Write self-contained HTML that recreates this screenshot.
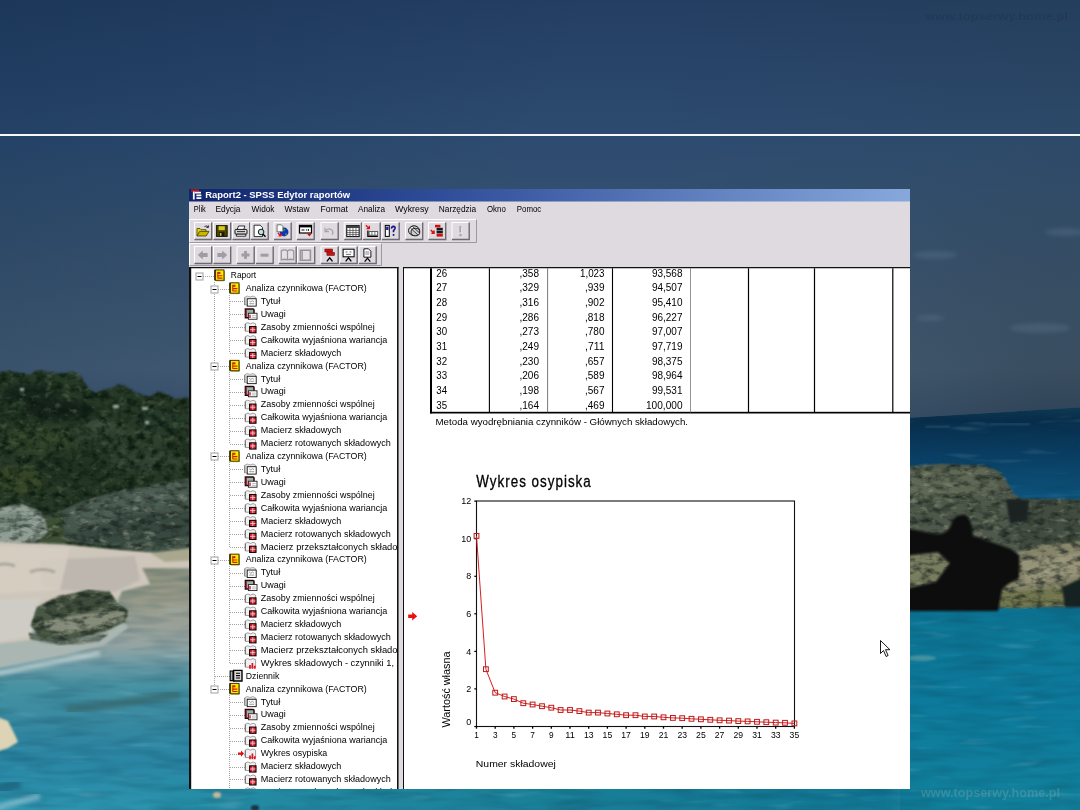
<!DOCTYPE html>
<html lang="pl"><head><meta charset="utf-8"><title>Raport2 - SPSS Edytor raportów</title>
<style>
html,body{margin:0;padding:0;background:#22385a;}
body{width:1080px;height:810px;overflow:hidden;}
svg{display:block;position:absolute;left:0;top:0;font-family:'Liberation Sans', sans-serif;will-change:transform;}
text{white-space:pre;}
</style></head>
<body>
<svg width="1080" height="810" viewBox="0 0 1080 810">

<defs>
<linearGradient id="sky" gradientUnits="userSpaceOnUse" x1="0" y1="0" x2="0" y2="425">
<stop offset="0" stop-color="#233e62"/><stop offset="0.32" stop-color="#2d4b70"/><stop offset="0.64" stop-color="#3a5470"/><stop offset="0.87" stop-color="#445c74"/><stop offset="1" stop-color="#38506c"/>
</linearGradient>
<linearGradient id="skyL" gradientUnits="userSpaceOnUse" x1="0" y1="0" x2="600" y2="300">
<stop offset="0" stop-color="#001e3c" stop-opacity="0.22"/><stop offset="0.8" stop-color="#001e3c" stop-opacity="0"/><stop offset="1" stop-color="#001e3c" stop-opacity="0"/>
</linearGradient>
<linearGradient id="seaR" gradientUnits="userSpaceOnUse" x1="0" y1="408" x2="0" y2="810">
<stop offset="0" stop-color="#0e3852"/><stop offset="0.03" stop-color="#082c4a"/><stop offset="0.06" stop-color="#083252"/><stop offset="0.12" stop-color="#0a3e64"/><stop offset="0.18" stop-color="#0c4c74"/><stop offset="0.22" stop-color="#0c527c"/><stop offset="0.3" stop-color="#0c5a84"/><stop offset="0.49" stop-color="#0c7090"/><stop offset="0.55" stop-color="#0d7796"/><stop offset="0.73" stop-color="#0d7a9c"/><stop offset="0.95" stop-color="#11809c"/><stop offset="1" stop-color="#11809c"/>
</linearGradient>
<linearGradient id="seaL" gradientUnits="userSpaceOnUse" x1="0" y1="560" x2="0" y2="810">
<stop offset="0" stop-color="#90927e"/><stop offset="0.12" stop-color="#969884"/><stop offset="0.24" stop-color="#9a9f94"/><stop offset="0.34" stop-color="#94a4a2"/><stop offset="0.42" stop-color="#6c9ca6"/><stop offset="0.5" stop-color="#4892a2"/><stop offset="0.68" stop-color="#3487a0"/><stop offset="0.8" stop-color="#2a86a4"/><stop offset="1" stop-color="#2c94ae"/>
</linearGradient>
<filter id="b1" x="-10%" y="-10%" width="120%" height="120%"><feGaussianBlur stdDeviation="1"/></filter>
<filter id="b2" x="-10%" y="-10%" width="120%" height="120%"><feGaussianBlur stdDeviation="2"/></filter>
<filter id="b4" x="-20%" y="-20%" width="140%" height="140%"><feGaussianBlur stdDeviation="4"/></filter>
<filter id="b8" x="-30%" y="-30%" width="160%" height="160%"><feGaussianBlur stdDeviation="8"/></filter>

<filter id="txTree" x="0" y="0" width="100%" height="100%" color-interpolation-filters="sRGB">
<feTurbulence type="fractalNoise" baseFrequency="0.11 0.14" numOctaves="3" seed="3" result="n"/>
<feColorMatrix in="n" type="matrix" values="0 0 0 0 0  0 0 0 0 0  0 0 0 0 0  2.4 0 0 0 -0.95" result="a"/>
<feFlood flood-color="#0c1c10" result="f"/>
<feComposite in="f" in2="a" operator="in" result="dark"/>
<feColorMatrix in="n" type="matrix" values="0 0 0 0 0  0 0 0 0 0  0 0 0 0 0  0 -2.4 0 0 1.05" result="a2"/>
<feFlood flood-color="#4c5e44" result="f2"/>
<feComposite in="f2" in2="a2" operator="in" result="light"/>
<feMerge result="m"><feMergeNode in="SourceGraphic"/><feMergeNode in="dark"/><feMergeNode in="light"/></feMerge>
<feComposite in="m" in2="SourceGraphic" operator="in"/>
<feGaussianBlur stdDeviation="0.7"/>
</filter>
<filter id="txRock" x="0" y="0" width="100%" height="100%" color-interpolation-filters="sRGB">
<feTurbulence type="fractalNoise" baseFrequency="0.09 0.16" numOctaves="3" seed="11" result="n"/>
<feColorMatrix in="n" type="matrix" values="0 0 0 0 0  0 0 0 0 0  0 0 0 0 0  1.7 0 0 0 -0.72" result="a"/>
<feFlood flood-color="#101a16" result="f"/>
<feComposite in="f" in2="a" operator="in" result="dark"/>
<feColorMatrix in="n" type="matrix" values="0 0 0 0 0  0 0 0 0 0  0 0 0 0 0  0 -1.7 0 0 0.72" result="a2"/>
<feFlood flood-color="#a4a690" result="f2"/>
<feComposite in="f2" in2="a2" operator="in" result="light"/>
<feMerge result="m"><feMergeNode in="SourceGraphic"/><feMergeNode in="dark"/><feMergeNode in="light"/></feMerge>
<feComposite in="m" in2="SourceGraphic" operator="in"/>
<feGaussianBlur stdDeviation="0.7"/>
</filter>
<filter id="txSea" x="0" y="0" width="100%" height="100%" color-interpolation-filters="sRGB">
<feTurbulence type="fractalNoise" baseFrequency="0.02 0.12" numOctaves="2" seed="5" result="n"/>
<feColorMatrix in="n" type="matrix" values="0 0 0 0 0  0 0 0 0 0  0 0 0 0 0  0.6 0 0 0 -0.24" result="a"/>
<feFlood flood-color="#0a4058" result="f"/>
<feComposite in="f" in2="a" operator="in" result="dark"/>
<feColorMatrix in="n" type="matrix" values="0 0 0 0 0  0 0 0 0 0  0 0 0 0 0  0 -0.6 0 0 0.22" result="a2"/>
<feFlood flood-color="#bfe6ee" result="f2"/>
<feComposite in="f2" in2="a2" operator="in" result="light"/>
<feMerge result="m"><feMergeNode in="SourceGraphic"/><feMergeNode in="dark"/><feMergeNode in="light"/></feMerge>
<feComposite in="m" in2="SourceGraphic" operator="in"/>
</filter>
<linearGradient id="strip" gradientUnits="userSpaceOnUse" x1="150" y1="0" x2="930" y2="0"><stop offset="0" stop-color="#268ea6"/><stop offset="0.5" stop-color="#1a8098"/><stop offset="1" stop-color="#107694"/></linearGradient>
<linearGradient id="stripM" gradientUnits="userSpaceOnUse" x1="150" y1="0" x2="930" y2="0"><stop offset="0" stop-color="#fff" stop-opacity="0"/><stop offset="0.06" stop-color="#fff" stop-opacity="1"/><stop offset="0.94" stop-color="#fff" stop-opacity="1"/><stop offset="1" stop-color="#fff" stop-opacity="0"/></linearGradient><mask id="mstrip"><rect x="150" y="770" width="780" height="40" fill="url(#stripM)"/></mask>
<radialGradient id="skyR" gradientUnits="userSpaceOnUse" cx="1060" cy="440" r="300"><stop offset="0" stop-color="#16202e" stop-opacity="0.30"/><stop offset="0.45" stop-color="#16202e" stop-opacity="0.12"/><stop offset="1" stop-color="#16202e" stop-opacity="0"/></radialGradient>
<linearGradient id="skyG" gradientUnits="userSpaceOnUse" x1="650" y1="0" x2="1080" y2="0"><stop offset="0" stop-color="#2d3c28" stop-opacity="0"/><stop offset="1" stop-color="#2d3c28" stop-opacity="0.1"/></linearGradient>
</defs>
<!-- sky -->
<rect width="1080" height="425" fill="url(#sky)"/>
<rect width="1080" height="425" fill="url(#skyL)"/>
<rect x="600" y="100" width="480" height="325" fill="url(#skyR)"/>
<rect x="650" y="0" width="430" height="425" fill="url(#skyG)"/>
<g fill="#7890a8" opacity="0.22" filter="url(#b2)"><ellipse cx="935" cy="255" rx="22" ry="4"/><ellipse cx="1065" cy="232" rx="20" ry="4"/><ellipse cx="1040" cy="328" rx="30" ry="5"/><ellipse cx="930" cy="318" rx="14" ry="3"/></g>

<!-- ===== right side ===== -->
<g filter="url(#txSea)">
<polygon points="880,419.5 1080,407.5 1080,810 880,810" fill="url(#seaR)"/>
</g>
<path d="M925,427 h25 M990,424 h40" stroke="#6f98a8" stroke-width="1.5" opacity="0.35" filter="url(#b1)"/>
<g filter="url(#txRock)">
<g filter="url(#b1)">
<polygon points="900,467 940,463 985,465 1000,471 1008,482 1013,492 1021,498 1085,499 1085,607 1018,609 900,607" fill="#4f594b"/>
<polygon points="900,470 985,468 1000,488 960,500 900,498" fill="#626b58" opacity="0.8"/>
<polygon points="900,500 1000,500 1005,530 960,512 900,525" fill="#4c5748" opacity="0.8"/>
<polygon points="1012,498 1085,499 1085,548 1020,553" fill="#434e41"/>
<polygon points="1019,552 1040,546 1085,541 1085,604 1000,608 998,585 1018,580" fill="#86856a"/>
<polygon points="1022,560 1085,552 1085,575 1026,584" fill="#9a967c" opacity="0.8"/>
<polygon points="1000,592 1085,586 1085,604 1000,608" fill="#6e7348" opacity="0.8"/>
<polygon points="900,556 938,552 950,563 936,582 900,590" fill="#797d5f"/>
</g>
</g>
<g filter="url(#b1)">
<path d="M900,527 L930,533 Q948,538 952,522 Q956,513 966,515 Q972,520 973,536 L1000,545 Q1016,550 1019,556 L1019,578 Q1006,584 1002,590 L998,611 L900,611 L900,590 L936,582 L950,563 L938,552 L900,556 Z" fill="#090f0f"/>
<polygon points="1006,499 1029,500 1027,520 1010,524" fill="#1a2424"/>
<polygon points="1062,587 1085,577 1085,607 1065,607" fill="#182420"/>
</g>
<path d="M1000,610 h80" stroke="#9cc0c0" stroke-width="2.5" opacity="0.6" filter="url(#b1)"/>
<path d="M900,612 h100" stroke="#0a3a4a" stroke-width="4" opacity="0.6" filter="url(#b1)"/>
<ellipse cx="922" cy="658" rx="14" ry="3" fill="#5a9ca0" opacity="0.7" filter="url(#b1)"/>
<!-- ===== left side ===== -->
<g filter="url(#txSea)">
<rect x="0" y="555" width="900" height="255" fill="url(#seaL)"/>
</g>
<g filter="url(#txTree)">
<g filter="url(#b1)">
<polygon points="-5,373 8,370 15,372 30,374 38,369 45,371 60,373 72,371 80,374 86,385 95,392 104,389 110,388 118,384 125,385 135,392 150,396 158,391 165,393 175,398 186,397 200,402 200,560 -5,560" fill="#253727"/>
</g>
<g filter="url(#b2)">
<ellipse cx="30" cy="395" rx="28" ry="10" fill="#19271c"/>
<ellipse cx="60" cy="410" rx="35" ry="9" fill="#17241a"/>
<ellipse cx="120" cy="440" rx="50" ry="12" fill="#2d412d"/>
<ellipse cx="40" cy="440" rx="35" ry="14" fill="#31442b"/>
<ellipse cx="160" cy="420" rx="30" ry="10" fill="#283b29"/>
<ellipse cx="70" cy="470" rx="40" ry="12" fill="#203120"/>
<ellipse cx="20" cy="480" rx="25" ry="14" fill="#344427"/>
<ellipse cx="150" cy="462" rx="40" ry="10" fill="#304331"/>
<ellipse cx="100" cy="425" rx="18" ry="6" fill="#384937"/>
</g>
</g>
<g fill="#c8d0cc" filter="url(#b1)" opacity="0.8"><rect x="113" y="405" width="6" height="3"/><rect x="142" y="407" width="6" height="3"/><rect x="145" y="421" width="4" height="3"/><rect x="20" y="388" width="4" height="3"/></g>
<g filter="url(#txRock)">
<g filter="url(#b1)">
<polygon points="35,520 60,510 90,498 120,490 150,485 200,477 200,556 150,553 100,546 60,541 35,539" fill="#44564c"/>
<polygon points="70,512 120,494 200,482 200,500 120,512 80,530" fill="#52645a" opacity="0.7"/>
<polygon points="70,535 130,515 200,510 200,535 140,540 100,545" fill="#36463c" opacity="0.8"/>
<polygon points="36,520 62,512 66,545 40,545" fill="#3d4f36"/>
<polygon points="-5,508 22,503 42,512 48,532 34,543 -5,546" fill="#909e94"/>
<polygon points="-5,515 20,512 30,525 -5,535" fill="#788a7e"/>
</g>
</g>
<g filter="url(#b1)">
<polygon points="-5,542 60,544 120,550 200,556 200,568 142,568 150,584 122,591 116,608 128,628 104,645 60,656 -5,669" fill="#aab6b2"/><polygon points="-5,542 60,544 120,550 200,556 200,568 142,568 150,584 122,591 116,600 40,612 30,640 -5,644" fill="#cec6ba"/>
<polygon points="40,560 135,556 140,580 115,592 60,590 42,585" fill="#b3adaa" opacity="0.6"/>
<polygon points="-5,600 40,598 30,636 -5,642" fill="#cfccc6"/><polygon points="-5,546 70,548 60,590 -5,594" fill="#d6cec2" opacity="0.8"/>
<polygon points="150,553 190,548 200,550 200,560 165,562" fill="#a9a88e"/>
<path d="M-5,566 q10,-4 20,0 M30,572 q12,-5 25,0" stroke="#8d8c84" stroke-width="3" fill="none" opacity="0.6"/>
</g>
<g filter="url(#txRock)">
<g filter="url(#b1)">
<polygon points="30,626 36,607 58,596 88,589 110,591 118,603 129,611 126,622 106,632 70,640 40,638" fill="#4a5944"/>
<polygon points="42,606 62,597 90,591 108,594 114,604 100,608 70,610 50,614" fill="#3f4e3c"/>
<polygon points="44,622 70,616 100,612 124,611 124,620 100,628 70,632 46,630" fill="#8f9582" opacity="0.85"/>
<polygon points="28,632 70,640 110,633 100,642 60,646 30,640" fill="#3c4a38" opacity="0.8"/>
</g>
</g>
<polygon points="-5,716 8,721 15,735 18,742 8,748 -5,752" fill="#dcd4b4" filter="url(#b1)"/>
<path d="M-5,674 L100,653" stroke="#d4dede" stroke-width="4" fill="none" filter="url(#b2)" opacity="0.85"/>
<path d="M66,710 L130,702 L180,694" stroke="#386a70" stroke-width="8" fill="none" filter="url(#b2)" opacity="0.8"/>
<path d="M-5,790 L20,783" stroke="#1a5f7a" stroke-width="10" fill="none" filter="url(#b2)" opacity="0.7"/>
<path d="M-5,808 L40,796" stroke="#a8d4e0" stroke-width="6" fill="none" filter="url(#b2)" opacity="0.6"/>
<!-- bottom strip water -->
<g mask="url(#mstrip)"><g filter="url(#txSea)"><rect x="150" y="780" width="780" height="30" fill="url(#strip)"/></g></g>
<ellipse cx="217" cy="795" rx="4" ry="3" fill="#c8b898" filter="url(#b1)"/>
<ellipse cx="255" cy="808" rx="4" ry="3" fill="#1a3040" filter="url(#b1)"/>

<rect x="0" y="134" width="1080" height="2" fill="#f6f8fa"/>
<defs><filter id="b05"><feGaussianBlur stdDeviation="0.6"/></filter><linearGradient id="tgrad" gradientUnits="userSpaceOnUse" x1="189" y1="0" x2="910" y2="0"><stop offset="0" stop-color="#10266c"/><stop offset="0.35" stop-color="#2f4d9a"/><stop offset="1" stop-color="#86a8dc"/></linearGradient></defs>
<text x="921.00" y="797.00" font-size="13" fill="#a0b4b0" font-weight="bold" textLength="139.00" lengthAdjust="spacingAndGlyphs" opacity="0.28" filter="url(#b05)">www.topserwy.home.pl</text>
<text x="925.00" y="19.50" font-size="11.5" fill="#101c30" font-weight="bold" textLength="143.00" lengthAdjust="spacingAndGlyphs" opacity="0.16" filter="url(#b05)">www.topserwy.home.pl</text>
<g id="win">
<rect x="189" y="189" width="721" height="600" fill="#dedae0"/>
<rect x="189" y="189" width="721" height="12.5" fill="url(#tgrad)"/>
<g transform="translate(192,190)"><rect x="-1" y="0" width="11" height="10.6" fill="#14246a"/><rect x="-1" y="-0.6" width="8" height="2.2" fill="#c01818"/><path d="M1.8,1.6 v8 M3,2.6 h6 M4.4,5.4 h5 M4.4,8.2 h5" stroke="#fff" stroke-width="1.8" fill="none"/></g>
<text x="205.20" y="197.80" font-size="9" fill="#fff" font-weight="bold" textLength="145.00" lengthAdjust="spacingAndGlyphs">Raport2 - SPSS Edytor raportów</text>
<text x="193.80" y="212.40" font-size="9" fill="#000" textLength="12.00" lengthAdjust="spacingAndGlyphs">Plik</text>
<text x="215.50" y="212.40" font-size="9" fill="#000" textLength="25.00" lengthAdjust="spacingAndGlyphs">Edycja</text>
<text x="251.50" y="212.40" font-size="9" fill="#000" textLength="23.00" lengthAdjust="spacingAndGlyphs">Widok</text>
<text x="284.50" y="212.40" font-size="9" fill="#000" textLength="25.00" lengthAdjust="spacingAndGlyphs">Wstaw</text>
<text x="320.50" y="212.40" font-size="9" fill="#000" textLength="27.50" lengthAdjust="spacingAndGlyphs">Format</text>
<text x="358.00" y="212.40" font-size="9" fill="#000" textLength="27.00" lengthAdjust="spacingAndGlyphs">Analiza</text>
<text x="395.00" y="212.40" font-size="9" fill="#000" textLength="33.75" lengthAdjust="spacingAndGlyphs">Wykresy</text>
<text x="438.75" y="212.40" font-size="9" fill="#000" textLength="37.50" lengthAdjust="spacingAndGlyphs">Narzędzia</text>
<text x="487.00" y="212.40" font-size="9" fill="#000" textLength="18.75" lengthAdjust="spacingAndGlyphs">Okno</text>
<text x="516.75" y="212.40" font-size="9" fill="#000" textLength="24.50" lengthAdjust="spacingAndGlyphs">Pomoc</text>
<path d="M189.5,242.5 V219.5 H476.5" stroke="#fff" fill="none"/><path d="M189.5,242.5 H476.5 V219.5" stroke="#9c98a0" fill="none"/>
<path d="M189.5,265.5 V243.5 H381.5" stroke="#fff" fill="none"/><path d="M189.5,265.5 H381.5 V243.5" stroke="#9c98a0" fill="none"/>
<g transform="translate(194.00,222.00)">
<rect x="0" y="0" width="18" height="17.5" fill="#dedae0"/>
<path d="M0.5,17 V0.5 H17.5" stroke="#fff" fill="none"/><path d="M0.5,17.5 H17.7 V0.5" stroke="#6e6a72" stroke-width="1.4" fill="none"/>
<path d="M3,14 v-7.5 h3 l1,1.2 h5 v2" fill="#e8d800" stroke="#403800" stroke-width="0.8"/><path d="M3,14 l2.6,-4.6 h9.4 l-2.8,4.6 z" fill="#c8b800" stroke="#403800" stroke-width="0.8"/><path d="M10.5,4.6 q2.2,-1.6 3.6,0.6 m0.3,-1.8 v2 h-2" stroke="#000" stroke-width="0.8" fill="none"/>
</g>
<g transform="translate(213.00,222.00)">
<rect x="0" y="0" width="18" height="17.5" fill="#dedae0"/>
<path d="M0.5,17 V0.5 H17.5" stroke="#fff" fill="none"/><path d="M0.5,17.5 H17.7 V0.5" stroke="#6e6a72" stroke-width="1.4" fill="none"/>
<rect x="3.4" y="3.6" width="10.8" height="10.8" fill="#4a4400" stroke="#101000" stroke-width="0.9"/><rect x="5.6" y="4.2" width="6.2" height="4" fill="#d8cc20"/><rect x="6" y="10.2" width="5.4" height="4" fill="#1a1800"/><rect x="6.8" y="11" width="1.7" height="2.8" fill="#c8c040"/>
</g>
<g transform="translate(232.00,222.00)">
<rect x="0" y="0" width="18" height="17.5" fill="#dedae0"/>
<path d="M0.5,17 V0.5 H17.5" stroke="#fff" fill="none"/><path d="M0.5,17.5 H17.7 V0.5" stroke="#6e6a72" stroke-width="1.4" fill="none"/>
<path d="M5.2,7.4 l1.4,-3.4 h6.2 l-1,3.4" fill="#fff" stroke="#000" stroke-width="0.8"/><rect x="3" y="7.4" width="12" height="4.8" rx="1" fill="#d8d8d8" stroke="#000" stroke-width="0.9"/><path d="M4.4,12.2 h9.4 v2 h-9.4 z" fill="#fff" stroke="#000" stroke-width="0.8"/><path d="M5,9.6 h8" stroke="#000" stroke-width="0.8"/>
</g>
<g transform="translate(250.50,222.00)">
<rect x="0" y="0" width="18" height="17.5" fill="#dedae0"/>
<path d="M0.5,17 V0.5 H17.5" stroke="#fff" fill="none"/><path d="M0.5,17.5 H17.7 V0.5" stroke="#6e6a72" stroke-width="1.4" fill="none"/>
<path d="M3.6,3.2 h6 l2.4,2.4 v9 h-8.4 z" fill="#fff" stroke="#000" stroke-width="0.8"/><circle cx="10.6" cy="10" r="2.8" fill="#b8e0e0" stroke="#000" stroke-width="0.9"/><path d="M12.6,12.2 l2.4,2.6" stroke="#000" stroke-width="1.4"/>
</g>
<g transform="translate(273.50,222.00)">
<rect x="0" y="0" width="18" height="17.5" fill="#dedae0"/>
<path d="M0.5,17 V0.5 H17.5" stroke="#fff" fill="none"/><path d="M0.5,17.5 H17.7 V0.5" stroke="#6e6a72" stroke-width="1.4" fill="none"/>
<circle cx="10.6" cy="10" r="4.4" fill="#1830c0"/><path d="M8.6,7 q2,-1.4 3.4,0.4 q-0.6,2 -2.6,2.2 z M11.4,11.4 q1.6,-0.6 2.6,0.6 q-0.8,1.6 -2.2,1.6 z" fill="#20a020"/><path d="M3.6,2.8 h4.2 l1.6,1.6 v5.4 h-5.8 z" fill="#fff" stroke="#404040" stroke-width="0.7"/><path d="M4.4,11 l3,3 m0,-2.4 v2.4 h-2.4" stroke="#e01010" stroke-width="1.2" fill="none"/>
</g>
<g transform="translate(296.50,222.00)">
<rect x="0" y="0" width="18" height="17.5" fill="#dedae0"/>
<path d="M0.5,17 V0.5 H17.5" stroke="#fff" fill="none"/><path d="M0.5,17.5 H17.7 V0.5" stroke="#6e6a72" stroke-width="1.4" fill="none"/>
<rect x="3" y="3.4" width="12" height="7.6" fill="#fff" stroke="#000" stroke-width="1.2"/><rect x="3" y="3.4" width="12" height="2" fill="#000"/><path d="M5,8 h3 M9.4,8 h1.4 M12,7.2 v1.6" stroke="#000" stroke-width="1"/><path d="M10.4,11.6 h5 l-2.5,3 z" fill="#c01010"/>
</g>
<g transform="translate(320.50,222.00)">
<rect x="0" y="0" width="18" height="17.5" fill="#dedae0"/>
<path d="M0.5,17 V0.5 H17.5" stroke="#fff" fill="none"/><path d="M0.5,17.5 H17.7 V0.5" stroke="#6e6a72" stroke-width="1.4" fill="none"/>
<path d="M5.4,8.6 q3.6,-3.6 6.6,0 q1,2 -0.4,4" stroke="#a8a4ac" stroke-width="1.3" fill="none"/><path d="M4.6,5.8 v3.8 h3.8" stroke="#a8a4ac" stroke-width="1.3" fill="none"/>
</g>
<g transform="translate(343.75,222.00)">
<rect x="0" y="0" width="18" height="17.5" fill="#dedae0"/>
<path d="M0.5,17 V0.5 H17.5" stroke="#fff" fill="none"/><path d="M0.5,17.5 H17.7 V0.5" stroke="#6e6a72" stroke-width="1.4" fill="none"/>
<rect x="3" y="3.6" width="12.4" height="11" fill="#fff" stroke="#000" stroke-width="1"/><rect x="3" y="3.6" width="12.4" height="2.4" fill="#404040"/><path d="M3,8.4 h12.4 M3,10.6 h12.4 M3,12.6 h12.4 M6.2,6 v8.6 M9.2,6 v8.6 M12.2,6 v8.6" stroke="#404040" stroke-width="0.7"/>
</g>
<g transform="translate(362.50,222.00)">
<rect x="0" y="0" width="18" height="17.5" fill="#dedae0"/>
<path d="M0.5,17 V0.5 H17.5" stroke="#fff" fill="none"/><path d="M0.5,17.5 H17.7 V0.5" stroke="#6e6a72" stroke-width="1.4" fill="none"/>
<path d="M3.4,3.2 l3.4,3.4 m0,-2.8 v2.8 h-2.8" stroke="#e01010" stroke-width="1.3" fill="none"/><path d="M5.4,8.4 v6 h10" stroke="#000" stroke-width="1.3" fill="none"/><rect x="6.6" y="9.6" width="8.6" height="3.6" fill="#fff" stroke="#404040" stroke-width="0.8"/><path d="M9.4,9.6 v3.6 M12.4,9.6 v3.6" stroke="#404040" stroke-width="0.7"/>
</g>
<g transform="translate(381.50,222.00)">
<rect x="0" y="0" width="18" height="17.5" fill="#dedae0"/>
<path d="M0.5,17 V0.5 H17.5" stroke="#fff" fill="none"/><path d="M0.5,17.5 H17.7 V0.5" stroke="#6e6a72" stroke-width="1.4" fill="none"/>
<rect x="3.8" y="3.4" width="4" height="11" fill="#fff" stroke="#000" stroke-width="1"/><rect x="4.6" y="4.6" width="2.4" height="3.4" fill="#1c2a9a"/><path d="M10,6.6 q0.2,-2.2 2,-2.2 q1.8,0.2 1.6,1.8 q-0.2,1.2 -1.6,2.4 v1.6" stroke="#14148a" stroke-width="1.6" fill="none"/><rect x="11.2" y="12" width="1.7" height="1.8" fill="#14148a"/>
</g>
<g transform="translate(405.00,222.00)">
<rect x="0" y="0" width="18" height="17.5" fill="#dedae0"/>
<path d="M0.5,17 V0.5 H17.5" stroke="#fff" fill="none"/><path d="M0.5,17.5 H17.7 V0.5" stroke="#6e6a72" stroke-width="1.4" fill="none"/>
<ellipse cx="9" cy="8.6" rx="5.4" ry="4.8" fill="#f4f4f4" stroke="#000" stroke-width="1"/><ellipse cx="10.4" cy="10" rx="4.4" ry="3.8" fill="#d0d0d0" stroke="#000" stroke-width="0.9"/><path d="M5.4,6 l7.6,7 M7.6,4.6 l6.6,6" stroke="#000" stroke-width="0.7"/>
</g>
<g transform="translate(428.00,222.00)">
<rect x="0" y="0" width="18" height="17.5" fill="#dedae0"/>
<path d="M0.5,17 V0.5 H17.5" stroke="#fff" fill="none"/><path d="M0.5,17.5 H17.7 V0.5" stroke="#6e6a72" stroke-width="1.4" fill="none"/>
<rect x="7" y="2.8" width="5.4" height="2.6" fill="#d01010"/><rect x="8.6" y="5.8" width="6.2" height="2.6" fill="#181818"/><rect x="8.6" y="8.8" width="6.2" height="2.6" fill="#181818"/><rect x="8.6" y="11.8" width="6.2" height="2.8" fill="#d01010"/><path d="M2.8,8 l3.2,3.2 m0,-2.6 v2.6 h-2.6" stroke="#e01010" stroke-width="1.5" fill="none"/>
</g>
<g transform="translate(451.50,222.00)">
<rect x="0" y="0" width="18" height="17.5" fill="#dedae0"/>
<path d="M0.5,17 V0.5 H17.5" stroke="#fff" fill="none"/><path d="M0.5,17.5 H17.7 V0.5" stroke="#6e6a72" stroke-width="1.4" fill="none"/>
<path d="M9,4 v6.4" stroke="#a8a4ac" stroke-width="2.2"/><rect x="7.9" y="12" width="2.2" height="2.2" fill="#a8a4ac"/><path d="M10,4.5 v6.4" stroke="#fff" stroke-width="0.6"/>
</g>
<g transform="translate(194.00,246.00)">
<rect x="0" y="0" width="18" height="17.5" fill="#dedae0"/>
<path d="M0.5,17 V0.5 H17.5" stroke="#fff" fill="none"/><path d="M0.5,17.5 H17.7 V0.5" stroke="#6e6a72" stroke-width="1.4" fill="none"/>
<path d="M3.8,9 l5,-4.6 v2.6 h4.8 v4 h-4.8 v2.6 z" fill="#a09ca4"/>
</g>
<g transform="translate(213.00,246.00)">
<rect x="0" y="0" width="18" height="17.5" fill="#dedae0"/>
<path d="M0.5,17 V0.5 H17.5" stroke="#fff" fill="none"/><path d="M0.5,17.5 H17.7 V0.5" stroke="#6e6a72" stroke-width="1.4" fill="none"/>
<path d="M14.2,9 l-5,-4.6 v2.6 h-4.8 v4 h4.8 v2.6 z" fill="#a09ca4"/>
</g>
<g transform="translate(236.50,246.00)">
<rect x="0" y="0" width="18" height="17.5" fill="#dedae0"/>
<path d="M0.5,17 V0.5 H17.5" stroke="#fff" fill="none"/><path d="M0.5,17.5 H17.7 V0.5" stroke="#6e6a72" stroke-width="1.4" fill="none"/>
<path d="M9,5 v8 M5,9 h8" stroke="#a09ca4" stroke-width="2.8"/>
</g>
<g transform="translate(255.50,246.00)">
<rect x="0" y="0" width="18" height="17.5" fill="#dedae0"/>
<path d="M0.5,17 V0.5 H17.5" stroke="#fff" fill="none"/><path d="M0.5,17.5 H17.7 V0.5" stroke="#6e6a72" stroke-width="1.4" fill="none"/>
<path d="M5,9.2 h8" stroke="#a09ca4" stroke-width="3"/>
</g>
<g transform="translate(278.50,246.00)">
<rect x="0" y="0" width="18" height="17.5" fill="#dedae0"/>
<path d="M0.5,17 V0.5 H17.5" stroke="#fff" fill="none"/><path d="M0.5,17.5 H17.7 V0.5" stroke="#6e6a72" stroke-width="1.4" fill="none"/>
<path d="M2.8,5 q3.1,-2.2 6.2,0 q3.1,-2.2 6.2,0 v8.8 q-3.1,-1.4 -6.2,0 q-3.1,-1.4 -6.2,0 z M9,5 v8.8" fill="#e4e0e6" stroke="#98949c" stroke-width="1.2"/><path d="M3,13.6 h12" stroke="#98949c" stroke-width="1.2"/>
</g>
<g transform="translate(297.00,246.00)">
<rect x="0" y="0" width="18" height="17.5" fill="#dedae0"/>
<path d="M0.5,17 V0.5 H17.5" stroke="#fff" fill="none"/><path d="M0.5,17.5 H17.7 V0.5" stroke="#6e6a72" stroke-width="1.4" fill="none"/>
<path d="M3.4,4.2 h10 v10 h-10 z" fill="#e4e0e6" stroke="#98949c" stroke-width="1.6"/><path d="M5.4,4.2 v10 M3.4,6 h2 M3.4,8 h2 M3.4,10 h2 M3.4,12 h2" stroke="#98949c" stroke-width="0.9"/>
</g>
<g transform="translate(320.50,246.00)">
<rect x="0" y="0" width="18" height="17.5" fill="#dedae0"/>
<path d="M0.5,17 V0.5 H17.5" stroke="#fff" fill="none"/><path d="M0.5,17.5 H17.7 V0.5" stroke="#6e6a72" stroke-width="1.4" fill="none"/>
<rect x="4.4" y="3" width="7.6" height="3" fill="#d01010" stroke="#500" stroke-width="0.5"/><rect x="6.4" y="6.4" width="7.6" height="3" fill="#d01010" stroke="#500" stroke-width="0.5"/><path d="M6.4,15.4 l2.8,-3.6 l2.8,3.6" stroke="#000" stroke-width="1.3" fill="none"/>
</g>
<g transform="translate(339.50,246.00)">
<rect x="0" y="0" width="18" height="17.5" fill="#dedae0"/>
<path d="M0.5,17 V0.5 H17.5" stroke="#fff" fill="none"/><path d="M0.5,17.5 H17.7 V0.5" stroke="#6e6a72" stroke-width="1.4" fill="none"/>
<rect x="3.6" y="3.2" width="11" height="7.6" fill="#fff" stroke="#000" stroke-width="1"/><path d="M6,6 h2 M10,6 h2 M6.4,8.4 h5" stroke="#606060" stroke-width="0.9"/><path d="M6.2,15.4 l2.8,-3.6 l2.8,3.6" stroke="#000" stroke-width="1.3" fill="none"/>
</g>
<g transform="translate(358.50,246.00)">
<rect x="0" y="0" width="18" height="17.5" fill="#dedae0"/>
<path d="M0.5,17 V0.5 H17.5" stroke="#fff" fill="none"/><path d="M0.5,17.5 H17.7 V0.5" stroke="#6e6a72" stroke-width="1.4" fill="none"/>
<path d="M5.4,2.8 h4.6 l2.4,2.4 v6 h-7 z" fill="#fff" stroke="#000" stroke-width="0.9"/><path d="M6.8,6 h4 M6.8,8 h4" stroke="#606060" stroke-width="0.8"/><path d="M6.2,15.6 l2.8,-3.4 l2.8,3.4" stroke="#000" stroke-width="1.3" fill="none"/>
</g>
<rect x="189" y="267" width="210" height="522" fill="#fff"/>
<rect x="403" y="267" width="507" height="522" fill="#fff"/>
<path d="M189,267.6 H398.5 M403,267.6 H910" stroke="#111" stroke-width="1.3" fill="none"/>
<rect x="189" y="267" width="2.2" height="522" fill="#101010"/>
<rect x="397" y="267" width="1.6" height="522" fill="#101010"/>
<rect x="403" y="267" width="1" height="522" fill="#101010"/>
<clipPath id="ctree"><rect x="191.2" y="268.2" width="205.8" height="520.8"/></clipPath>
<g clip-path="url(#ctree)">
<path d="M214.5,282 V689" stroke="#a4a4a4" stroke-width="1" stroke-dasharray="1 1" fill="none" shape-rendering="crispEdges"/>
<path d="M229.5,295 V353" stroke="#a4a4a4" stroke-width="1" stroke-dasharray="1 1" fill="none" shape-rendering="crispEdges"/>
<path d="M229.5,372 V444" stroke="#a4a4a4" stroke-width="1" stroke-dasharray="1 1" fill="none" shape-rendering="crispEdges"/>
<path d="M229.5,462 V547" stroke="#a4a4a4" stroke-width="1" stroke-dasharray="1 1" fill="none" shape-rendering="crispEdges"/>
<path d="M229.5,566 V663" stroke="#a4a4a4" stroke-width="1" stroke-dasharray="1 1" fill="none" shape-rendering="crispEdges"/>
<path d="M229.5,695 V792" stroke="#a4a4a4" stroke-width="1" stroke-dasharray="1 1" fill="none" shape-rendering="crispEdges"/>
<path d="M203,276.5 H215" stroke="#a4a4a4" stroke-width="1" stroke-dasharray="1 1" fill="none" shape-rendering="crispEdges"/>
<rect x="196" y="273.0" width="7" height="7" fill="#fff" stroke="#a0a0a0" stroke-width="1"/><path d="M197.5,276.5 H201.5" stroke="#000" stroke-width="1.1"/>
<g transform="translate(214.6,269.10)"><rect x="0.4" y="0.8" width="9" height="10.4" fill="#ffe800" stroke="#2a2400" stroke-width="0.9"/><path d="M0.4,1 v10" stroke="#201c00" stroke-width="1.4"/><path d="M9.8,2 v9.6 h-8.4" stroke="#6a6400" stroke-width="0.8" fill="none"/><rect x="2.6" y="2.8" width="3.2" height="2" fill="#d02000"/><path d="M3.2,4.6 v4.6 M3.2,6.6 h4.6 M3.2,9 h4.6" stroke="#d02000" stroke-width="1.1" fill="none"/></g>
<text x="230.80" y="278.20" font-size="8.5" fill="#000" textLength="25.30" lengthAdjust="spacingAndGlyphs">Raport</text>
<path d="M218,289.5 H230" stroke="#a4a4a4" stroke-width="1" stroke-dasharray="1 1" fill="none" shape-rendering="crispEdges"/>
<rect x="211" y="286.0" width="7" height="7" fill="#fff" stroke="#a0a0a0" stroke-width="1"/><path d="M212.5,289.5 H216.5" stroke="#000" stroke-width="1.1"/>
<g transform="translate(229.6,282.02)"><rect x="0.4" y="0.8" width="9" height="10.4" fill="#ffe800" stroke="#2a2400" stroke-width="0.9"/><path d="M0.4,1 v10" stroke="#201c00" stroke-width="1.4"/><path d="M9.8,2 v9.6 h-8.4" stroke="#6a6400" stroke-width="0.8" fill="none"/><rect x="2.6" y="2.8" width="3.2" height="2" fill="#d02000"/><path d="M3.2,4.6 v4.6 M3.2,6.6 h4.6 M3.2,9 h4.6" stroke="#d02000" stroke-width="1.1" fill="none"/></g>
<text x="245.80" y="291.12" font-size="8.5" fill="#000" textLength="121.00" lengthAdjust="spacingAndGlyphs">Analiza czynnikowa (FACTOR)</text>
<path d="M230,301.5 H245" stroke="#a4a4a4" stroke-width="1" stroke-dasharray="1 1" fill="none" shape-rendering="crispEdges"/>
<g transform="translate(244.6,294.94)"><path d="M0,2.4 q2.5,-2.4 5.4,-0.4 q3,-2 5.6,0.4 v7.6 h-11 z" fill="#e6e6e6" stroke="#9a9a9a" stroke-width="0.8"/><path d="M0.2,2.6 v7.4" stroke="#7a7a7a" stroke-width="1"/><rect x="2.6" y="3.8" width="9" height="7.4" fill="#fff" stroke="#101010" stroke-width="0.9"/><path d="M4.6,5.8 l1.6,1.2 l1.6,-1.2 l1.6,1.2 M4.6,8.8 h5" stroke="#707070" stroke-width="0.7" fill="none"/></g>
<text x="260.80" y="304.04" font-size="8.5" fill="#000" textLength="19.50" lengthAdjust="spacingAndGlyphs">Tytuł</text>
<path d="M230,314.5 H245" stroke="#a4a4a4" stroke-width="1" stroke-dasharray="1 1" fill="none" shape-rendering="crispEdges"/>
<g transform="translate(244.6,307.86)"><path d="M0.8,1.2 h7.6 q1,0 1,1 v7.6 h-8.6 z" fill="#98b4ac" stroke="#2a0408" stroke-width="1.5"/><path d="M1.6,2 v7.4" stroke="#a01828" stroke-width="1.2"/><rect x="3.8" y="5.4" width="8.6" height="6" fill="#fff" stroke="#202020" stroke-width="0.9"/><path d="M5.4,6.8 v3.4" stroke="#d81030" stroke-width="1.4"/><path d="M7.4,7.8 h3.8 M7.4,9.6 h3.8" stroke="#a0a0a0" stroke-width="0.7"/></g>
<text x="260.80" y="316.96" font-size="8.5" fill="#000" textLength="25.00" lengthAdjust="spacingAndGlyphs">Uwagi</text>
<path d="M230,327.5 H245" stroke="#a4a4a4" stroke-width="1" stroke-dasharray="1 1" fill="none" shape-rendering="crispEdges"/>
<g transform="translate(244.6,320.78)"><path d="M0.6,3 q2.6,-2.2 5.2,0 q2.6,-2.2 5.2,0 v7.5 h-10.4 z" fill="#f0f0f0" stroke="#8a8a8a" stroke-width="0.8"/><path d="M0.8,3.2 v7" stroke="#707070" stroke-width="1"/><rect x="5" y="5.8" width="6.4" height="6.2" fill="#d82838" stroke="#140000" stroke-width="1.1"/><path d="M5.6,8.9 h5.2 M8.2,6.4 v5" stroke="#f8dcdc" stroke-width="0.8"/></g>
<text x="260.80" y="329.88" font-size="8.5" fill="#000" textLength="114.00" lengthAdjust="spacingAndGlyphs">Zasoby zmienności wspólnej</text>
<path d="M230,340.5 H245" stroke="#a4a4a4" stroke-width="1" stroke-dasharray="1 1" fill="none" shape-rendering="crispEdges"/>
<g transform="translate(244.6,333.70)"><path d="M0.6,3 q2.6,-2.2 5.2,0 q2.6,-2.2 5.2,0 v7.5 h-10.4 z" fill="#f0f0f0" stroke="#8a8a8a" stroke-width="0.8"/><path d="M0.8,3.2 v7" stroke="#707070" stroke-width="1"/><rect x="5" y="5.8" width="6.4" height="6.2" fill="#d82838" stroke="#140000" stroke-width="1.1"/><path d="M5.6,8.9 h5.2 M8.2,6.4 v5" stroke="#f8dcdc" stroke-width="0.8"/></g>
<text x="260.80" y="342.80" font-size="8.5" fill="#000" textLength="126.50" lengthAdjust="spacingAndGlyphs">Całkowita wyjaśniona wariancja</text>
<path d="M230,353.5 H245" stroke="#a4a4a4" stroke-width="1" stroke-dasharray="1 1" fill="none" shape-rendering="crispEdges"/>
<g transform="translate(244.6,346.62)"><path d="M0.6,3 q2.6,-2.2 5.2,0 q2.6,-2.2 5.2,0 v7.5 h-10.4 z" fill="#f0f0f0" stroke="#8a8a8a" stroke-width="0.8"/><path d="M0.8,3.2 v7" stroke="#707070" stroke-width="1"/><rect x="5" y="5.8" width="6.4" height="6.2" fill="#d82838" stroke="#140000" stroke-width="1.1"/><path d="M5.6,8.9 h5.2 M8.2,6.4 v5" stroke="#f8dcdc" stroke-width="0.8"/></g>
<text x="260.80" y="355.72" font-size="8.5" fill="#000" textLength="80.50" lengthAdjust="spacingAndGlyphs">Macierz składowych</text>
<path d="M218,366.5 H230" stroke="#a4a4a4" stroke-width="1" stroke-dasharray="1 1" fill="none" shape-rendering="crispEdges"/>
<rect x="211" y="363.0" width="7" height="7" fill="#fff" stroke="#a0a0a0" stroke-width="1"/><path d="M212.5,366.5 H216.5" stroke="#000" stroke-width="1.1"/>
<g transform="translate(229.6,359.54)"><rect x="0.4" y="0.8" width="9" height="10.4" fill="#ffe800" stroke="#2a2400" stroke-width="0.9"/><path d="M0.4,1 v10" stroke="#201c00" stroke-width="1.4"/><path d="M9.8,2 v9.6 h-8.4" stroke="#6a6400" stroke-width="0.8" fill="none"/><rect x="2.6" y="2.8" width="3.2" height="2" fill="#d02000"/><path d="M3.2,4.6 v4.6 M3.2,6.6 h4.6 M3.2,9 h4.6" stroke="#d02000" stroke-width="1.1" fill="none"/></g>
<text x="245.80" y="368.64" font-size="8.5" fill="#000" textLength="121.00" lengthAdjust="spacingAndGlyphs">Analiza czynnikowa (FACTOR)</text>
<path d="M230,379.5 H245" stroke="#a4a4a4" stroke-width="1" stroke-dasharray="1 1" fill="none" shape-rendering="crispEdges"/>
<g transform="translate(244.6,372.46)"><path d="M0,2.4 q2.5,-2.4 5.4,-0.4 q3,-2 5.6,0.4 v7.6 h-11 z" fill="#e6e6e6" stroke="#9a9a9a" stroke-width="0.8"/><path d="M0.2,2.6 v7.4" stroke="#7a7a7a" stroke-width="1"/><rect x="2.6" y="3.8" width="9" height="7.4" fill="#fff" stroke="#101010" stroke-width="0.9"/><path d="M4.6,5.8 l1.6,1.2 l1.6,-1.2 l1.6,1.2 M4.6,8.8 h5" stroke="#707070" stroke-width="0.7" fill="none"/></g>
<text x="260.80" y="381.56" font-size="8.5" fill="#000" textLength="19.50" lengthAdjust="spacingAndGlyphs">Tytuł</text>
<path d="M230,392.5 H245" stroke="#a4a4a4" stroke-width="1" stroke-dasharray="1 1" fill="none" shape-rendering="crispEdges"/>
<g transform="translate(244.6,385.38)"><path d="M0.8,1.2 h7.6 q1,0 1,1 v7.6 h-8.6 z" fill="#98b4ac" stroke="#2a0408" stroke-width="1.5"/><path d="M1.6,2 v7.4" stroke="#a01828" stroke-width="1.2"/><rect x="3.8" y="5.4" width="8.6" height="6" fill="#fff" stroke="#202020" stroke-width="0.9"/><path d="M5.4,6.8 v3.4" stroke="#d81030" stroke-width="1.4"/><path d="M7.4,7.8 h3.8 M7.4,9.6 h3.8" stroke="#a0a0a0" stroke-width="0.7"/></g>
<text x="260.80" y="394.48" font-size="8.5" fill="#000" textLength="25.00" lengthAdjust="spacingAndGlyphs">Uwagi</text>
<path d="M230,405.5 H245" stroke="#a4a4a4" stroke-width="1" stroke-dasharray="1 1" fill="none" shape-rendering="crispEdges"/>
<g transform="translate(244.6,398.30)"><path d="M0.6,3 q2.6,-2.2 5.2,0 q2.6,-2.2 5.2,0 v7.5 h-10.4 z" fill="#f0f0f0" stroke="#8a8a8a" stroke-width="0.8"/><path d="M0.8,3.2 v7" stroke="#707070" stroke-width="1"/><rect x="5" y="5.8" width="6.4" height="6.2" fill="#d82838" stroke="#140000" stroke-width="1.1"/><path d="M5.6,8.9 h5.2 M8.2,6.4 v5" stroke="#f8dcdc" stroke-width="0.8"/></g>
<text x="260.80" y="407.40" font-size="8.5" fill="#000" textLength="114.00" lengthAdjust="spacingAndGlyphs">Zasoby zmienności wspólnej</text>
<path d="M230,418.5 H245" stroke="#a4a4a4" stroke-width="1" stroke-dasharray="1 1" fill="none" shape-rendering="crispEdges"/>
<g transform="translate(244.6,411.22)"><path d="M0.6,3 q2.6,-2.2 5.2,0 q2.6,-2.2 5.2,0 v7.5 h-10.4 z" fill="#f0f0f0" stroke="#8a8a8a" stroke-width="0.8"/><path d="M0.8,3.2 v7" stroke="#707070" stroke-width="1"/><rect x="5" y="5.8" width="6.4" height="6.2" fill="#d82838" stroke="#140000" stroke-width="1.1"/><path d="M5.6,8.9 h5.2 M8.2,6.4 v5" stroke="#f8dcdc" stroke-width="0.8"/></g>
<text x="260.80" y="420.32" font-size="8.5" fill="#000" textLength="126.50" lengthAdjust="spacingAndGlyphs">Całkowita wyjaśniona wariancja</text>
<path d="M230,431.5 H245" stroke="#a4a4a4" stroke-width="1" stroke-dasharray="1 1" fill="none" shape-rendering="crispEdges"/>
<g transform="translate(244.6,424.14)"><path d="M0.6,3 q2.6,-2.2 5.2,0 q2.6,-2.2 5.2,0 v7.5 h-10.4 z" fill="#f0f0f0" stroke="#8a8a8a" stroke-width="0.8"/><path d="M0.8,3.2 v7" stroke="#707070" stroke-width="1"/><rect x="5" y="5.8" width="6.4" height="6.2" fill="#d82838" stroke="#140000" stroke-width="1.1"/><path d="M5.6,8.9 h5.2 M8.2,6.4 v5" stroke="#f8dcdc" stroke-width="0.8"/></g>
<text x="260.80" y="433.24" font-size="8.5" fill="#000" textLength="80.50" lengthAdjust="spacingAndGlyphs">Macierz składowych</text>
<path d="M230,444.5 H245" stroke="#a4a4a4" stroke-width="1" stroke-dasharray="1 1" fill="none" shape-rendering="crispEdges"/>
<g transform="translate(244.6,437.06)"><path d="M0.6,3 q2.6,-2.2 5.2,0 q2.6,-2.2 5.2,0 v7.5 h-10.4 z" fill="#f0f0f0" stroke="#8a8a8a" stroke-width="0.8"/><path d="M0.8,3.2 v7" stroke="#707070" stroke-width="1"/><rect x="5" y="5.8" width="6.4" height="6.2" fill="#d82838" stroke="#140000" stroke-width="1.1"/><path d="M5.6,8.9 h5.2 M8.2,6.4 v5" stroke="#f8dcdc" stroke-width="0.8"/></g>
<text x="260.80" y="446.16" font-size="8.5" fill="#000" textLength="130.00" lengthAdjust="spacingAndGlyphs">Macierz rotowanych składowych</text>
<path d="M218,456.5 H230" stroke="#a4a4a4" stroke-width="1" stroke-dasharray="1 1" fill="none" shape-rendering="crispEdges"/>
<rect x="211" y="453.0" width="7" height="7" fill="#fff" stroke="#a0a0a0" stroke-width="1"/><path d="M212.5,456.5 H216.5" stroke="#000" stroke-width="1.1"/>
<g transform="translate(229.6,449.98)"><rect x="0.4" y="0.8" width="9" height="10.4" fill="#ffe800" stroke="#2a2400" stroke-width="0.9"/><path d="M0.4,1 v10" stroke="#201c00" stroke-width="1.4"/><path d="M9.8,2 v9.6 h-8.4" stroke="#6a6400" stroke-width="0.8" fill="none"/><rect x="2.6" y="2.8" width="3.2" height="2" fill="#d02000"/><path d="M3.2,4.6 v4.6 M3.2,6.6 h4.6 M3.2,9 h4.6" stroke="#d02000" stroke-width="1.1" fill="none"/></g>
<text x="245.80" y="459.08" font-size="8.5" fill="#000" textLength="121.00" lengthAdjust="spacingAndGlyphs">Analiza czynnikowa (FACTOR)</text>
<path d="M230,469.5 H245" stroke="#a4a4a4" stroke-width="1" stroke-dasharray="1 1" fill="none" shape-rendering="crispEdges"/>
<g transform="translate(244.6,462.90)"><path d="M0,2.4 q2.5,-2.4 5.4,-0.4 q3,-2 5.6,0.4 v7.6 h-11 z" fill="#e6e6e6" stroke="#9a9a9a" stroke-width="0.8"/><path d="M0.2,2.6 v7.4" stroke="#7a7a7a" stroke-width="1"/><rect x="2.6" y="3.8" width="9" height="7.4" fill="#fff" stroke="#101010" stroke-width="0.9"/><path d="M4.6,5.8 l1.6,1.2 l1.6,-1.2 l1.6,1.2 M4.6,8.8 h5" stroke="#707070" stroke-width="0.7" fill="none"/></g>
<text x="260.80" y="472.00" font-size="8.5" fill="#000" textLength="19.50" lengthAdjust="spacingAndGlyphs">Tytuł</text>
<path d="M230,482.5 H245" stroke="#a4a4a4" stroke-width="1" stroke-dasharray="1 1" fill="none" shape-rendering="crispEdges"/>
<g transform="translate(244.6,475.82)"><path d="M0.8,1.2 h7.6 q1,0 1,1 v7.6 h-8.6 z" fill="#98b4ac" stroke="#2a0408" stroke-width="1.5"/><path d="M1.6,2 v7.4" stroke="#a01828" stroke-width="1.2"/><rect x="3.8" y="5.4" width="8.6" height="6" fill="#fff" stroke="#202020" stroke-width="0.9"/><path d="M5.4,6.8 v3.4" stroke="#d81030" stroke-width="1.4"/><path d="M7.4,7.8 h3.8 M7.4,9.6 h3.8" stroke="#a0a0a0" stroke-width="0.7"/></g>
<text x="260.80" y="484.92" font-size="8.5" fill="#000" textLength="25.00" lengthAdjust="spacingAndGlyphs">Uwagi</text>
<path d="M230,495.5 H245" stroke="#a4a4a4" stroke-width="1" stroke-dasharray="1 1" fill="none" shape-rendering="crispEdges"/>
<g transform="translate(244.6,488.74)"><path d="M0.6,3 q2.6,-2.2 5.2,0 q2.6,-2.2 5.2,0 v7.5 h-10.4 z" fill="#f0f0f0" stroke="#8a8a8a" stroke-width="0.8"/><path d="M0.8,3.2 v7" stroke="#707070" stroke-width="1"/><rect x="5" y="5.8" width="6.4" height="6.2" fill="#d82838" stroke="#140000" stroke-width="1.1"/><path d="M5.6,8.9 h5.2 M8.2,6.4 v5" stroke="#f8dcdc" stroke-width="0.8"/></g>
<text x="260.80" y="497.84" font-size="8.5" fill="#000" textLength="114.00" lengthAdjust="spacingAndGlyphs">Zasoby zmienności wspólnej</text>
<path d="M230,508.5 H245" stroke="#a4a4a4" stroke-width="1" stroke-dasharray="1 1" fill="none" shape-rendering="crispEdges"/>
<g transform="translate(244.6,501.66)"><path d="M0.6,3 q2.6,-2.2 5.2,0 q2.6,-2.2 5.2,0 v7.5 h-10.4 z" fill="#f0f0f0" stroke="#8a8a8a" stroke-width="0.8"/><path d="M0.8,3.2 v7" stroke="#707070" stroke-width="1"/><rect x="5" y="5.8" width="6.4" height="6.2" fill="#d82838" stroke="#140000" stroke-width="1.1"/><path d="M5.6,8.9 h5.2 M8.2,6.4 v5" stroke="#f8dcdc" stroke-width="0.8"/></g>
<text x="260.80" y="510.76" font-size="8.5" fill="#000" textLength="126.50" lengthAdjust="spacingAndGlyphs">Całkowita wyjaśniona wariancja</text>
<path d="M230,521.5 H245" stroke="#a4a4a4" stroke-width="1" stroke-dasharray="1 1" fill="none" shape-rendering="crispEdges"/>
<g transform="translate(244.6,514.58)"><path d="M0.6,3 q2.6,-2.2 5.2,0 q2.6,-2.2 5.2,0 v7.5 h-10.4 z" fill="#f0f0f0" stroke="#8a8a8a" stroke-width="0.8"/><path d="M0.8,3.2 v7" stroke="#707070" stroke-width="1"/><rect x="5" y="5.8" width="6.4" height="6.2" fill="#d82838" stroke="#140000" stroke-width="1.1"/><path d="M5.6,8.9 h5.2 M8.2,6.4 v5" stroke="#f8dcdc" stroke-width="0.8"/></g>
<text x="260.80" y="523.68" font-size="8.5" fill="#000" textLength="80.50" lengthAdjust="spacingAndGlyphs">Macierz składowych</text>
<path d="M230,534.5 H245" stroke="#a4a4a4" stroke-width="1" stroke-dasharray="1 1" fill="none" shape-rendering="crispEdges"/>
<g transform="translate(244.6,527.50)"><path d="M0.6,3 q2.6,-2.2 5.2,0 q2.6,-2.2 5.2,0 v7.5 h-10.4 z" fill="#f0f0f0" stroke="#8a8a8a" stroke-width="0.8"/><path d="M0.8,3.2 v7" stroke="#707070" stroke-width="1"/><rect x="5" y="5.8" width="6.4" height="6.2" fill="#d82838" stroke="#140000" stroke-width="1.1"/><path d="M5.6,8.9 h5.2 M8.2,6.4 v5" stroke="#f8dcdc" stroke-width="0.8"/></g>
<text x="260.80" y="536.60" font-size="8.5" fill="#000" textLength="130.00" lengthAdjust="spacingAndGlyphs">Macierz rotowanych składowych</text>
<path d="M230,547.5 H245" stroke="#a4a4a4" stroke-width="1" stroke-dasharray="1 1" fill="none" shape-rendering="crispEdges"/>
<g transform="translate(244.6,540.42)"><path d="M0.6,3 q2.6,-2.2 5.2,0 q2.6,-2.2 5.2,0 v7.5 h-10.4 z" fill="#f0f0f0" stroke="#8a8a8a" stroke-width="0.8"/><path d="M0.8,3.2 v7" stroke="#707070" stroke-width="1"/><rect x="5" y="5.8" width="6.4" height="6.2" fill="#d82838" stroke="#140000" stroke-width="1.1"/><path d="M5.6,8.9 h5.2 M8.2,6.4 v5" stroke="#f8dcdc" stroke-width="0.8"/></g>
<text x="260.80" y="549.52" font-size="8.5" fill="#000" textLength="158.00" lengthAdjust="spacingAndGlyphs">Macierz przekształconych składowych</text>
<path d="M218,560.5 H230" stroke="#a4a4a4" stroke-width="1" stroke-dasharray="1 1" fill="none" shape-rendering="crispEdges"/>
<rect x="211" y="557.0" width="7" height="7" fill="#fff" stroke="#a0a0a0" stroke-width="1"/><path d="M212.5,560.5 H216.5" stroke="#000" stroke-width="1.1"/>
<g transform="translate(229.6,553.34)"><rect x="0.4" y="0.8" width="9" height="10.4" fill="#ffe800" stroke="#2a2400" stroke-width="0.9"/><path d="M0.4,1 v10" stroke="#201c00" stroke-width="1.4"/><path d="M9.8,2 v9.6 h-8.4" stroke="#6a6400" stroke-width="0.8" fill="none"/><rect x="2.6" y="2.8" width="3.2" height="2" fill="#d02000"/><path d="M3.2,4.6 v4.6 M3.2,6.6 h4.6 M3.2,9 h4.6" stroke="#d02000" stroke-width="1.1" fill="none"/></g>
<text x="245.80" y="562.44" font-size="8.5" fill="#000" textLength="121.00" lengthAdjust="spacingAndGlyphs">Analiza czynnikowa (FACTOR)</text>
<path d="M230,573.5 H245" stroke="#a4a4a4" stroke-width="1" stroke-dasharray="1 1" fill="none" shape-rendering="crispEdges"/>
<g transform="translate(244.6,566.26)"><path d="M0,2.4 q2.5,-2.4 5.4,-0.4 q3,-2 5.6,0.4 v7.6 h-11 z" fill="#e6e6e6" stroke="#9a9a9a" stroke-width="0.8"/><path d="M0.2,2.6 v7.4" stroke="#7a7a7a" stroke-width="1"/><rect x="2.6" y="3.8" width="9" height="7.4" fill="#fff" stroke="#101010" stroke-width="0.9"/><path d="M4.6,5.8 l1.6,1.2 l1.6,-1.2 l1.6,1.2 M4.6,8.8 h5" stroke="#707070" stroke-width="0.7" fill="none"/></g>
<text x="260.80" y="575.36" font-size="8.5" fill="#000" textLength="19.50" lengthAdjust="spacingAndGlyphs">Tytuł</text>
<path d="M230,586.5 H245" stroke="#a4a4a4" stroke-width="1" stroke-dasharray="1 1" fill="none" shape-rendering="crispEdges"/>
<g transform="translate(244.6,579.18)"><path d="M0.8,1.2 h7.6 q1,0 1,1 v7.6 h-8.6 z" fill="#98b4ac" stroke="#2a0408" stroke-width="1.5"/><path d="M1.6,2 v7.4" stroke="#a01828" stroke-width="1.2"/><rect x="3.8" y="5.4" width="8.6" height="6" fill="#fff" stroke="#202020" stroke-width="0.9"/><path d="M5.4,6.8 v3.4" stroke="#d81030" stroke-width="1.4"/><path d="M7.4,7.8 h3.8 M7.4,9.6 h3.8" stroke="#a0a0a0" stroke-width="0.7"/></g>
<text x="260.80" y="588.28" font-size="8.5" fill="#000" textLength="25.00" lengthAdjust="spacingAndGlyphs">Uwagi</text>
<path d="M230,599.5 H245" stroke="#a4a4a4" stroke-width="1" stroke-dasharray="1 1" fill="none" shape-rendering="crispEdges"/>
<g transform="translate(244.6,592.10)"><path d="M0.6,3 q2.6,-2.2 5.2,0 q2.6,-2.2 5.2,0 v7.5 h-10.4 z" fill="#f0f0f0" stroke="#8a8a8a" stroke-width="0.8"/><path d="M0.8,3.2 v7" stroke="#707070" stroke-width="1"/><rect x="5" y="5.8" width="6.4" height="6.2" fill="#d82838" stroke="#140000" stroke-width="1.1"/><path d="M5.6,8.9 h5.2 M8.2,6.4 v5" stroke="#f8dcdc" stroke-width="0.8"/></g>
<text x="260.80" y="601.20" font-size="8.5" fill="#000" textLength="114.00" lengthAdjust="spacingAndGlyphs">Zasoby zmienności wspólnej</text>
<path d="M230,612.5 H245" stroke="#a4a4a4" stroke-width="1" stroke-dasharray="1 1" fill="none" shape-rendering="crispEdges"/>
<g transform="translate(244.6,605.02)"><path d="M0.6,3 q2.6,-2.2 5.2,0 q2.6,-2.2 5.2,0 v7.5 h-10.4 z" fill="#f0f0f0" stroke="#8a8a8a" stroke-width="0.8"/><path d="M0.8,3.2 v7" stroke="#707070" stroke-width="1"/><rect x="5" y="5.8" width="6.4" height="6.2" fill="#d82838" stroke="#140000" stroke-width="1.1"/><path d="M5.6,8.9 h5.2 M8.2,6.4 v5" stroke="#f8dcdc" stroke-width="0.8"/></g>
<text x="260.80" y="614.12" font-size="8.5" fill="#000" textLength="126.50" lengthAdjust="spacingAndGlyphs">Całkowita wyjaśniona wariancja</text>
<path d="M230,624.5 H245" stroke="#a4a4a4" stroke-width="1" stroke-dasharray="1 1" fill="none" shape-rendering="crispEdges"/>
<g transform="translate(244.6,617.94)"><path d="M0.6,3 q2.6,-2.2 5.2,0 q2.6,-2.2 5.2,0 v7.5 h-10.4 z" fill="#f0f0f0" stroke="#8a8a8a" stroke-width="0.8"/><path d="M0.8,3.2 v7" stroke="#707070" stroke-width="1"/><rect x="5" y="5.8" width="6.4" height="6.2" fill="#d82838" stroke="#140000" stroke-width="1.1"/><path d="M5.6,8.9 h5.2 M8.2,6.4 v5" stroke="#f8dcdc" stroke-width="0.8"/></g>
<text x="260.80" y="627.04" font-size="8.5" fill="#000" textLength="80.50" lengthAdjust="spacingAndGlyphs">Macierz składowych</text>
<path d="M230,637.5 H245" stroke="#a4a4a4" stroke-width="1" stroke-dasharray="1 1" fill="none" shape-rendering="crispEdges"/>
<g transform="translate(244.6,630.86)"><path d="M0.6,3 q2.6,-2.2 5.2,0 q2.6,-2.2 5.2,0 v7.5 h-10.4 z" fill="#f0f0f0" stroke="#8a8a8a" stroke-width="0.8"/><path d="M0.8,3.2 v7" stroke="#707070" stroke-width="1"/><rect x="5" y="5.8" width="6.4" height="6.2" fill="#d82838" stroke="#140000" stroke-width="1.1"/><path d="M5.6,8.9 h5.2 M8.2,6.4 v5" stroke="#f8dcdc" stroke-width="0.8"/></g>
<text x="260.80" y="639.96" font-size="8.5" fill="#000" textLength="130.00" lengthAdjust="spacingAndGlyphs">Macierz rotowanych składowych</text>
<path d="M230,650.5 H245" stroke="#a4a4a4" stroke-width="1" stroke-dasharray="1 1" fill="none" shape-rendering="crispEdges"/>
<g transform="translate(244.6,643.78)"><path d="M0.6,3 q2.6,-2.2 5.2,0 q2.6,-2.2 5.2,0 v7.5 h-10.4 z" fill="#f0f0f0" stroke="#8a8a8a" stroke-width="0.8"/><path d="M0.8,3.2 v7" stroke="#707070" stroke-width="1"/><rect x="5" y="5.8" width="6.4" height="6.2" fill="#d82838" stroke="#140000" stroke-width="1.1"/><path d="M5.6,8.9 h5.2 M8.2,6.4 v5" stroke="#f8dcdc" stroke-width="0.8"/></g>
<text x="260.80" y="652.88" font-size="8.5" fill="#000" textLength="158.00" lengthAdjust="spacingAndGlyphs">Macierz przekształconych składowych</text>
<path d="M230,663.5 H245" stroke="#a4a4a4" stroke-width="1" stroke-dasharray="1 1" fill="none" shape-rendering="crispEdges"/>
<g transform="translate(244.6,656.70)"><path d="M0.6,3 q2.6,-2.2 5.2,0 q2.6,-2.2 5.2,0 v7.5 h-10.4 z" fill="#f0f0f0" stroke="#8a8a8a" stroke-width="0.8"/><path d="M0.8,3.2 v7" stroke="#707070" stroke-width="1"/><path d="M5.4,12 v-3.6 M7.8,12 v-5.6 M10.2,12 v-3" stroke="#e01020" stroke-width="1.7"/></g>
<text x="260.80" y="665.80" font-size="8.5" fill="#000" textLength="141.00" lengthAdjust="spacingAndGlyphs">Wykres składowych - czynniki 1, 2</text>
<path d="M215,676.5 H230" stroke="#a4a4a4" stroke-width="1" stroke-dasharray="1 1" fill="none" shape-rendering="crispEdges"/>
<g transform="translate(229.6,669.62)"><path d="M0.6,1.4 h4 v9.6 h-4 z" fill="#fff" stroke="#000" stroke-width="1.2"/><path d="M4,0.8 h8.4 v10.6 h-8.4 z" fill="#d8d8d8" stroke="#000" stroke-width="1.4"/><path d="M6.4,3.6 h4 M6.4,6 h4 M6.4,8.4 h4" stroke="#000" stroke-width="1.1"/><path d="M2.6,1.4 v9.6" stroke="#000" stroke-width="1"/></g>
<text x="245.80" y="678.72" font-size="8.5" fill="#000" textLength="33.50" lengthAdjust="spacingAndGlyphs">Dziennik</text>
<path d="M218,689.5 H230" stroke="#a4a4a4" stroke-width="1" stroke-dasharray="1 1" fill="none" shape-rendering="crispEdges"/>
<rect x="211" y="686.0" width="7" height="7" fill="#fff" stroke="#a0a0a0" stroke-width="1"/><path d="M212.5,689.5 H216.5" stroke="#000" stroke-width="1.1"/>
<g transform="translate(229.6,682.54)"><rect x="0.4" y="0.8" width="9" height="10.4" fill="#ffe800" stroke="#2a2400" stroke-width="0.9"/><path d="M0.4,1 v10" stroke="#201c00" stroke-width="1.4"/><path d="M9.8,2 v9.6 h-8.4" stroke="#6a6400" stroke-width="0.8" fill="none"/><rect x="2.6" y="2.8" width="3.2" height="2" fill="#d02000"/><path d="M3.2,4.6 v4.6 M3.2,6.6 h4.6 M3.2,9 h4.6" stroke="#d02000" stroke-width="1.1" fill="none"/></g>
<text x="245.80" y="691.64" font-size="8.5" fill="#000" textLength="121.00" lengthAdjust="spacingAndGlyphs">Analiza czynnikowa (FACTOR)</text>
<path d="M230,702.5 H245" stroke="#a4a4a4" stroke-width="1" stroke-dasharray="1 1" fill="none" shape-rendering="crispEdges"/>
<g transform="translate(244.6,695.46)"><path d="M0,2.4 q2.5,-2.4 5.4,-0.4 q3,-2 5.6,0.4 v7.6 h-11 z" fill="#e6e6e6" stroke="#9a9a9a" stroke-width="0.8"/><path d="M0.2,2.6 v7.4" stroke="#7a7a7a" stroke-width="1"/><rect x="2.6" y="3.8" width="9" height="7.4" fill="#fff" stroke="#101010" stroke-width="0.9"/><path d="M4.6,5.8 l1.6,1.2 l1.6,-1.2 l1.6,1.2 M4.6,8.8 h5" stroke="#707070" stroke-width="0.7" fill="none"/></g>
<text x="260.80" y="704.56" font-size="8.5" fill="#000" textLength="19.50" lengthAdjust="spacingAndGlyphs">Tytuł</text>
<path d="M230,715.5 H245" stroke="#a4a4a4" stroke-width="1" stroke-dasharray="1 1" fill="none" shape-rendering="crispEdges"/>
<g transform="translate(244.6,708.38)"><path d="M0.8,1.2 h7.6 q1,0 1,1 v7.6 h-8.6 z" fill="#98b4ac" stroke="#2a0408" stroke-width="1.5"/><path d="M1.6,2 v7.4" stroke="#a01828" stroke-width="1.2"/><rect x="3.8" y="5.4" width="8.6" height="6" fill="#fff" stroke="#202020" stroke-width="0.9"/><path d="M5.4,6.8 v3.4" stroke="#d81030" stroke-width="1.4"/><path d="M7.4,7.8 h3.8 M7.4,9.6 h3.8" stroke="#a0a0a0" stroke-width="0.7"/></g>
<text x="260.80" y="717.48" font-size="8.5" fill="#000" textLength="25.00" lengthAdjust="spacingAndGlyphs">Uwagi</text>
<path d="M230,728.5 H245" stroke="#a4a4a4" stroke-width="1" stroke-dasharray="1 1" fill="none" shape-rendering="crispEdges"/>
<g transform="translate(244.6,721.30)"><path d="M0.6,3 q2.6,-2.2 5.2,0 q2.6,-2.2 5.2,0 v7.5 h-10.4 z" fill="#f0f0f0" stroke="#8a8a8a" stroke-width="0.8"/><path d="M0.8,3.2 v7" stroke="#707070" stroke-width="1"/><rect x="5" y="5.8" width="6.4" height="6.2" fill="#d82838" stroke="#140000" stroke-width="1.1"/><path d="M5.6,8.9 h5.2 M8.2,6.4 v5" stroke="#f8dcdc" stroke-width="0.8"/></g>
<text x="260.80" y="730.40" font-size="8.5" fill="#000" textLength="114.00" lengthAdjust="spacingAndGlyphs">Zasoby zmienności wspólnej</text>
<path d="M230,741.5 H245" stroke="#a4a4a4" stroke-width="1" stroke-dasharray="1 1" fill="none" shape-rendering="crispEdges"/>
<g transform="translate(244.6,734.22)"><path d="M0.6,3 q2.6,-2.2 5.2,0 q2.6,-2.2 5.2,0 v7.5 h-10.4 z" fill="#f0f0f0" stroke="#8a8a8a" stroke-width="0.8"/><path d="M0.8,3.2 v7" stroke="#707070" stroke-width="1"/><rect x="5" y="5.8" width="6.4" height="6.2" fill="#d82838" stroke="#140000" stroke-width="1.1"/><path d="M5.6,8.9 h5.2 M8.2,6.4 v5" stroke="#f8dcdc" stroke-width="0.8"/></g>
<text x="260.80" y="743.32" font-size="8.5" fill="#000" textLength="126.50" lengthAdjust="spacingAndGlyphs">Całkowita wyjaśniona wariancja</text>
<path d="M230,754.5 H245" stroke="#a4a4a4" stroke-width="1" stroke-dasharray="1 1" fill="none" shape-rendering="crispEdges"/>
<g transform="translate(244.6,747.14)"><path d="M0.6,3 q2.6,-2.2 5.2,0 q2.6,-2.2 5.2,0 v7.5 h-10.4 z" fill="#f0f0f0" stroke="#8a8a8a" stroke-width="0.8"/><path d="M0.8,3.2 v7" stroke="#707070" stroke-width="1"/><path d="M5.4,12 v-3.6 M7.8,12 v-5.6 M10.2,12 v-3" stroke="#e01020" stroke-width="1.7"/></g>
<text x="260.80" y="756.24" font-size="8.5" fill="#000" textLength="66.50" lengthAdjust="spacingAndGlyphs">Wykres osypiska</text>
<path d="M230,767.5 H245" stroke="#a4a4a4" stroke-width="1" stroke-dasharray="1 1" fill="none" shape-rendering="crispEdges"/>
<g transform="translate(244.6,760.06)"><path d="M0.6,3 q2.6,-2.2 5.2,0 q2.6,-2.2 5.2,0 v7.5 h-10.4 z" fill="#f0f0f0" stroke="#8a8a8a" stroke-width="0.8"/><path d="M0.8,3.2 v7" stroke="#707070" stroke-width="1"/><rect x="5" y="5.8" width="6.4" height="6.2" fill="#d82838" stroke="#140000" stroke-width="1.1"/><path d="M5.6,8.9 h5.2 M8.2,6.4 v5" stroke="#f8dcdc" stroke-width="0.8"/></g>
<text x="260.80" y="769.16" font-size="8.5" fill="#000" textLength="80.50" lengthAdjust="spacingAndGlyphs">Macierz składowych</text>
<path d="M230,779.5 H245" stroke="#a4a4a4" stroke-width="1" stroke-dasharray="1 1" fill="none" shape-rendering="crispEdges"/>
<g transform="translate(244.6,772.98)"><path d="M0.6,3 q2.6,-2.2 5.2,0 q2.6,-2.2 5.2,0 v7.5 h-10.4 z" fill="#f0f0f0" stroke="#8a8a8a" stroke-width="0.8"/><path d="M0.8,3.2 v7" stroke="#707070" stroke-width="1"/><rect x="5" y="5.8" width="6.4" height="6.2" fill="#d82838" stroke="#140000" stroke-width="1.1"/><path d="M5.6,8.9 h5.2 M8.2,6.4 v5" stroke="#f8dcdc" stroke-width="0.8"/></g>
<text x="260.80" y="782.08" font-size="8.5" fill="#000" textLength="130.00" lengthAdjust="spacingAndGlyphs">Macierz rotowanych składowych</text>
<path d="M230,792.5 H245" stroke="#a4a4a4" stroke-width="1" stroke-dasharray="1 1" fill="none" shape-rendering="crispEdges"/>
<g transform="translate(244.6,785.90)"><path d="M0.6,3 q2.6,-2.2 5.2,0 q2.6,-2.2 5.2,0 v7.5 h-10.4 z" fill="#f0f0f0" stroke="#8a8a8a" stroke-width="0.8"/><path d="M0.8,3.2 v7" stroke="#707070" stroke-width="1"/><rect x="5" y="5.8" width="6.4" height="6.2" fill="#d82838" stroke="#140000" stroke-width="1.1"/><path d="M5.6,8.9 h5.2 M8.2,6.4 v5" stroke="#f8dcdc" stroke-width="0.8"/></g>
<text x="260.80" y="795.00" font-size="8.5" fill="#000" textLength="158.00" lengthAdjust="spacingAndGlyphs">Macierz przekształconych składowych</text>
<path d="M238,752.4 h3 v-2 l3,3.2 l-3,3.2 v-2 h-3 z" fill="#e01010"/>
</g>
<clipPath id="cview"><rect x="404" y="268.2" width="506" height="520.8"/></clipPath>
<g clip-path="url(#cview)">
<rect x="430" y="260" width="2" height="153.40000000000003" fill="#000"/>
<rect x="430" y="411.8" width="500" height="1.7" fill="#000"/>
<path d="M489.4,260 V412.6" stroke="#000" stroke-width="1.1"/>
<path d="M547.6,260 V412.6" stroke="#555" stroke-width="0.8"/>
<path d="M612.5,260 V412.6" stroke="#000" stroke-width="1.1"/>
<path d="M690.5,260 V412.6" stroke="#777" stroke-width="0.8"/>
<path d="M748.5,260 V412.6" stroke="#000" stroke-width="1.2"/>
<path d="M814.5,260 V412.6" stroke="#000" stroke-width="1.2"/>
<path d="M892.8,260 V412.6" stroke="#000" stroke-width="1.2"/>
<text x="436.30" y="276.80" font-size="10.2" fill="#000" textLength="10.80" lengthAdjust="spacingAndGlyphs">26</text>
<text x="539.00" y="276.80" font-size="10.2" fill="#000" textLength="19.50" lengthAdjust="spacingAndGlyphs" text-anchor="end">,358</text>
<text x="604.50" y="276.80" font-size="10.2" fill="#000" textLength="24.50" lengthAdjust="spacingAndGlyphs" text-anchor="end">1,023</text>
<text x="682.50" y="276.80" font-size="10.2" fill="#000" textLength="30.60" lengthAdjust="spacingAndGlyphs" text-anchor="end">93,568</text>
<text x="436.30" y="291.47" font-size="10.2" fill="#000" textLength="10.80" lengthAdjust="spacingAndGlyphs">27</text>
<text x="539.00" y="291.47" font-size="10.2" fill="#000" textLength="19.50" lengthAdjust="spacingAndGlyphs" text-anchor="end">,329</text>
<text x="604.50" y="291.47" font-size="10.2" fill="#000" textLength="19.50" lengthAdjust="spacingAndGlyphs" text-anchor="end">,939</text>
<text x="682.50" y="291.47" font-size="10.2" fill="#000" textLength="30.60" lengthAdjust="spacingAndGlyphs" text-anchor="end">94,507</text>
<text x="436.30" y="306.14" font-size="10.2" fill="#000" textLength="10.80" lengthAdjust="spacingAndGlyphs">28</text>
<text x="539.00" y="306.14" font-size="10.2" fill="#000" textLength="19.50" lengthAdjust="spacingAndGlyphs" text-anchor="end">,316</text>
<text x="604.50" y="306.14" font-size="10.2" fill="#000" textLength="19.50" lengthAdjust="spacingAndGlyphs" text-anchor="end">,902</text>
<text x="682.50" y="306.14" font-size="10.2" fill="#000" textLength="30.60" lengthAdjust="spacingAndGlyphs" text-anchor="end">95,410</text>
<text x="436.30" y="320.81" font-size="10.2" fill="#000" textLength="10.80" lengthAdjust="spacingAndGlyphs">29</text>
<text x="539.00" y="320.81" font-size="10.2" fill="#000" textLength="19.50" lengthAdjust="spacingAndGlyphs" text-anchor="end">,286</text>
<text x="604.50" y="320.81" font-size="10.2" fill="#000" textLength="19.50" lengthAdjust="spacingAndGlyphs" text-anchor="end">,818</text>
<text x="682.50" y="320.81" font-size="10.2" fill="#000" textLength="30.60" lengthAdjust="spacingAndGlyphs" text-anchor="end">96,227</text>
<text x="436.30" y="335.48" font-size="10.2" fill="#000" textLength="10.80" lengthAdjust="spacingAndGlyphs">30</text>
<text x="539.00" y="335.48" font-size="10.2" fill="#000" textLength="19.50" lengthAdjust="spacingAndGlyphs" text-anchor="end">,273</text>
<text x="604.50" y="335.48" font-size="10.2" fill="#000" textLength="19.50" lengthAdjust="spacingAndGlyphs" text-anchor="end">,780</text>
<text x="682.50" y="335.48" font-size="10.2" fill="#000" textLength="30.60" lengthAdjust="spacingAndGlyphs" text-anchor="end">97,007</text>
<text x="436.30" y="350.15" font-size="10.2" fill="#000" textLength="10.80" lengthAdjust="spacingAndGlyphs">31</text>
<text x="539.00" y="350.15" font-size="10.2" fill="#000" textLength="19.50" lengthAdjust="spacingAndGlyphs" text-anchor="end">,249</text>
<text x="604.50" y="350.15" font-size="10.2" fill="#000" textLength="19.50" lengthAdjust="spacingAndGlyphs" text-anchor="end">,711</text>
<text x="682.50" y="350.15" font-size="10.2" fill="#000" textLength="30.60" lengthAdjust="spacingAndGlyphs" text-anchor="end">97,719</text>
<text x="436.30" y="364.82" font-size="10.2" fill="#000" textLength="10.80" lengthAdjust="spacingAndGlyphs">32</text>
<text x="539.00" y="364.82" font-size="10.2" fill="#000" textLength="19.50" lengthAdjust="spacingAndGlyphs" text-anchor="end">,230</text>
<text x="604.50" y="364.82" font-size="10.2" fill="#000" textLength="19.50" lengthAdjust="spacingAndGlyphs" text-anchor="end">,657</text>
<text x="682.50" y="364.82" font-size="10.2" fill="#000" textLength="30.60" lengthAdjust="spacingAndGlyphs" text-anchor="end">98,375</text>
<text x="436.30" y="379.49" font-size="10.2" fill="#000" textLength="10.80" lengthAdjust="spacingAndGlyphs">33</text>
<text x="539.00" y="379.49" font-size="10.2" fill="#000" textLength="19.50" lengthAdjust="spacingAndGlyphs" text-anchor="end">,206</text>
<text x="604.50" y="379.49" font-size="10.2" fill="#000" textLength="19.50" lengthAdjust="spacingAndGlyphs" text-anchor="end">,589</text>
<text x="682.50" y="379.49" font-size="10.2" fill="#000" textLength="30.60" lengthAdjust="spacingAndGlyphs" text-anchor="end">98,964</text>
<text x="436.30" y="394.16" font-size="10.2" fill="#000" textLength="10.80" lengthAdjust="spacingAndGlyphs">34</text>
<text x="539.00" y="394.16" font-size="10.2" fill="#000" textLength="19.50" lengthAdjust="spacingAndGlyphs" text-anchor="end">,198</text>
<text x="604.50" y="394.16" font-size="10.2" fill="#000" textLength="19.50" lengthAdjust="spacingAndGlyphs" text-anchor="end">,567</text>
<text x="682.50" y="394.16" font-size="10.2" fill="#000" textLength="30.60" lengthAdjust="spacingAndGlyphs" text-anchor="end">99,531</text>
<text x="436.30" y="408.83" font-size="10.2" fill="#000" textLength="10.80" lengthAdjust="spacingAndGlyphs">35</text>
<text x="539.00" y="408.83" font-size="10.2" fill="#000" textLength="19.50" lengthAdjust="spacingAndGlyphs" text-anchor="end">,164</text>
<text x="604.50" y="408.83" font-size="10.2" fill="#000" textLength="19.50" lengthAdjust="spacingAndGlyphs" text-anchor="end">,469</text>
<text x="682.50" y="408.83" font-size="10.2" fill="#000" textLength="36.50" lengthAdjust="spacingAndGlyphs" text-anchor="end">100,000</text>
<text x="435.50" y="425.30" font-size="9.5" fill="#000" textLength="252.50" lengthAdjust="spacingAndGlyphs">Metoda wyodrębniania czynników - Głównych składowych.</text>
<text transform="translate(476.3,487.4) scale(0.86,1)" font-size="15.6" fill="#000" stroke="#000" stroke-width="0.3" textLength="133.1" lengthAdjust="spacing">Wykres osypiska</text>
<rect x="476.5" y="501" width="318.0" height="225.5" fill="none" stroke="#111" stroke-width="1.1"/>
<path d="M474.3,726.5 H476.5" stroke="#000" stroke-width="1.2"/>
<text x="471.20" y="725.30" font-size="9" fill="#000" text-anchor="end">0</text>
<path d="M474.3,688.9 H476.5" stroke="#000" stroke-width="1.2"/>
<text x="471.20" y="692.14" font-size="9" fill="#000" text-anchor="end">2</text>
<path d="M474.3,651.4 H476.5" stroke="#000" stroke-width="1.2"/>
<text x="471.20" y="654.58" font-size="9" fill="#000" text-anchor="end">4</text>
<path d="M474.3,613.8 H476.5" stroke="#000" stroke-width="1.2"/>
<text x="471.20" y="617.02" font-size="9" fill="#000" text-anchor="end">6</text>
<path d="M474.3,576.3 H476.5" stroke="#000" stroke-width="1.2"/>
<text x="471.20" y="579.46" font-size="9" fill="#000" text-anchor="end">8</text>
<path d="M474.3,538.7 H476.5" stroke="#000" stroke-width="1.2"/>
<text x="471.20" y="541.90" font-size="9" fill="#000" text-anchor="end">10</text>
<path d="M474.3,501.1 H476.5" stroke="#000" stroke-width="1.2"/>
<text x="471.20" y="504.34" font-size="9" fill="#000" text-anchor="end">12</text>
<path d="M476.5,726.5 v2.2" stroke="#000" stroke-width="1.3"/>
<text x="476.50" y="738.00" font-size="9" fill="#000" textLength="4.60" lengthAdjust="spacingAndGlyphs" text-anchor="middle">1</text>
<path d="M495.2,726.5 v2.2" stroke="#000" stroke-width="1.3"/>
<text x="495.20" y="738.00" font-size="9" fill="#000" textLength="4.60" lengthAdjust="spacingAndGlyphs" text-anchor="middle">3</text>
<path d="M513.9,726.5 v2.2" stroke="#000" stroke-width="1.3"/>
<text x="513.90" y="738.00" font-size="9" fill="#000" textLength="4.60" lengthAdjust="spacingAndGlyphs" text-anchor="middle">5</text>
<path d="M532.6,726.5 v2.2" stroke="#000" stroke-width="1.3"/>
<text x="532.60" y="738.00" font-size="9" fill="#000" textLength="4.60" lengthAdjust="spacingAndGlyphs" text-anchor="middle">7</text>
<path d="M551.3,726.5 v2.2" stroke="#000" stroke-width="1.3"/>
<text x="551.30" y="738.00" font-size="9" fill="#000" textLength="4.60" lengthAdjust="spacingAndGlyphs" text-anchor="middle">9</text>
<path d="M570.0,726.5 v2.2" stroke="#000" stroke-width="1.3"/>
<text x="570.00" y="738.00" font-size="9" fill="#000" textLength="9.60" lengthAdjust="spacingAndGlyphs" text-anchor="middle">11</text>
<path d="M588.7,726.5 v2.2" stroke="#000" stroke-width="1.3"/>
<text x="588.70" y="738.00" font-size="9" fill="#000" textLength="9.60" lengthAdjust="spacingAndGlyphs" text-anchor="middle">13</text>
<path d="M607.4,726.5 v2.2" stroke="#000" stroke-width="1.3"/>
<text x="607.40" y="738.00" font-size="9" fill="#000" textLength="9.60" lengthAdjust="spacingAndGlyphs" text-anchor="middle">15</text>
<path d="M626.1,726.5 v2.2" stroke="#000" stroke-width="1.3"/>
<text x="626.10" y="738.00" font-size="9" fill="#000" textLength="9.60" lengthAdjust="spacingAndGlyphs" text-anchor="middle">17</text>
<path d="M644.8,726.5 v2.2" stroke="#000" stroke-width="1.3"/>
<text x="644.80" y="738.00" font-size="9" fill="#000" textLength="9.60" lengthAdjust="spacingAndGlyphs" text-anchor="middle">19</text>
<path d="M663.5,726.5 v2.2" stroke="#000" stroke-width="1.3"/>
<text x="663.50" y="738.00" font-size="9" fill="#000" textLength="9.60" lengthAdjust="spacingAndGlyphs" text-anchor="middle">21</text>
<path d="M682.2,726.5 v2.2" stroke="#000" stroke-width="1.3"/>
<text x="682.20" y="738.00" font-size="9" fill="#000" textLength="9.60" lengthAdjust="spacingAndGlyphs" text-anchor="middle">23</text>
<path d="M700.9,726.5 v2.2" stroke="#000" stroke-width="1.3"/>
<text x="700.90" y="738.00" font-size="9" fill="#000" textLength="9.60" lengthAdjust="spacingAndGlyphs" text-anchor="middle">25</text>
<path d="M719.6,726.5 v2.2" stroke="#000" stroke-width="1.3"/>
<text x="719.60" y="738.00" font-size="9" fill="#000" textLength="9.60" lengthAdjust="spacingAndGlyphs" text-anchor="middle">27</text>
<path d="M738.3,726.5 v2.2" stroke="#000" stroke-width="1.3"/>
<text x="738.30" y="738.00" font-size="9" fill="#000" textLength="9.60" lengthAdjust="spacingAndGlyphs" text-anchor="middle">29</text>
<path d="M757.0,726.5 v2.2" stroke="#000" stroke-width="1.3"/>
<text x="757.00" y="738.00" font-size="9" fill="#000" textLength="9.60" lengthAdjust="spacingAndGlyphs" text-anchor="middle">31</text>
<path d="M775.7,726.5 v2.2" stroke="#000" stroke-width="1.3"/>
<text x="775.70" y="738.00" font-size="9" fill="#000" textLength="9.60" lengthAdjust="spacingAndGlyphs" text-anchor="middle">33</text>
<path d="M794.4,726.5 v2.2" stroke="#000" stroke-width="1.3"/>
<text x="794.40" y="738.00" font-size="9" fill="#000" textLength="9.60" lengthAdjust="spacingAndGlyphs" text-anchor="middle">35</text>
<polyline points="476.5,535.9 485.9,669.2 495.2,692.7 504.6,696.5 513.9,699.1 523.2,703.2 532.6,704.5 542.0,706.2 551.3,707.7 560.6,710.0 570.0,710.0 579.4,711.1 588.7,712.6 598.0,712.6 607.4,713.5 616.8,714.3 626.1,715.2 635.5,715.2 644.8,716.5 654.1,716.5 663.5,717.3 672.9,717.9 682.2,718.2 691.5,718.8 700.9,719.3 710.2,719.8 719.6,720.3 729.0,720.6 738.3,721.1 747.6,721.4 757.0,721.8 766.3,722.2 775.7,722.6 785.0,722.8 794.4,723.4" fill="none" stroke="#d62020" stroke-width="1"/>
<rect x="474.1" y="533.5" width="4.8" height="4.8" fill="none" stroke="#c01818" stroke-width="1"/>
<rect x="483.5" y="666.8" width="4.8" height="4.8" fill="none" stroke="#c01818" stroke-width="1"/>
<rect x="492.8" y="690.3" width="4.8" height="4.8" fill="none" stroke="#c01818" stroke-width="1"/>
<rect x="502.2" y="694.1" width="4.8" height="4.8" fill="none" stroke="#c01818" stroke-width="1"/>
<rect x="511.5" y="696.7" width="4.8" height="4.8" fill="none" stroke="#c01818" stroke-width="1"/>
<rect x="520.9" y="700.8" width="4.8" height="4.8" fill="none" stroke="#c01818" stroke-width="1"/>
<rect x="530.2" y="702.1" width="4.8" height="4.8" fill="none" stroke="#c01818" stroke-width="1"/>
<rect x="539.6" y="703.8" width="4.8" height="4.8" fill="none" stroke="#c01818" stroke-width="1"/>
<rect x="548.9" y="705.3" width="4.8" height="4.8" fill="none" stroke="#c01818" stroke-width="1"/>
<rect x="558.2" y="707.6" width="4.8" height="4.8" fill="none" stroke="#c01818" stroke-width="1"/>
<rect x="567.6" y="707.6" width="4.8" height="4.8" fill="none" stroke="#c01818" stroke-width="1"/>
<rect x="577.0" y="708.7" width="4.8" height="4.8" fill="none" stroke="#c01818" stroke-width="1"/>
<rect x="586.3" y="710.2" width="4.8" height="4.8" fill="none" stroke="#c01818" stroke-width="1"/>
<rect x="595.6" y="710.2" width="4.8" height="4.8" fill="none" stroke="#c01818" stroke-width="1"/>
<rect x="605.0" y="711.1" width="4.8" height="4.8" fill="none" stroke="#c01818" stroke-width="1"/>
<rect x="614.4" y="711.9" width="4.8" height="4.8" fill="none" stroke="#c01818" stroke-width="1"/>
<rect x="623.7" y="712.8" width="4.8" height="4.8" fill="none" stroke="#c01818" stroke-width="1"/>
<rect x="633.1" y="712.8" width="4.8" height="4.8" fill="none" stroke="#c01818" stroke-width="1"/>
<rect x="642.4" y="714.1" width="4.8" height="4.8" fill="none" stroke="#c01818" stroke-width="1"/>
<rect x="651.8" y="714.1" width="4.8" height="4.8" fill="none" stroke="#c01818" stroke-width="1"/>
<rect x="661.1" y="714.9" width="4.8" height="4.8" fill="none" stroke="#c01818" stroke-width="1"/>
<rect x="670.5" y="715.5" width="4.8" height="4.8" fill="none" stroke="#c01818" stroke-width="1"/>
<rect x="679.8" y="715.8" width="4.8" height="4.8" fill="none" stroke="#c01818" stroke-width="1"/>
<rect x="689.1" y="716.4" width="4.8" height="4.8" fill="none" stroke="#c01818" stroke-width="1"/>
<rect x="698.5" y="716.9" width="4.8" height="4.8" fill="none" stroke="#c01818" stroke-width="1"/>
<rect x="707.9" y="717.4" width="4.8" height="4.8" fill="none" stroke="#c01818" stroke-width="1"/>
<rect x="717.2" y="717.9" width="4.8" height="4.8" fill="none" stroke="#c01818" stroke-width="1"/>
<rect x="726.6" y="718.2" width="4.8" height="4.8" fill="none" stroke="#c01818" stroke-width="1"/>
<rect x="735.9" y="718.7" width="4.8" height="4.8" fill="none" stroke="#c01818" stroke-width="1"/>
<rect x="745.2" y="719.0" width="4.8" height="4.8" fill="none" stroke="#c01818" stroke-width="1"/>
<rect x="754.6" y="719.4" width="4.8" height="4.8" fill="none" stroke="#c01818" stroke-width="1"/>
<rect x="763.9" y="719.8" width="4.8" height="4.8" fill="none" stroke="#c01818" stroke-width="1"/>
<rect x="773.3" y="720.2" width="4.8" height="4.8" fill="none" stroke="#c01818" stroke-width="1"/>
<rect x="782.6" y="720.4" width="4.8" height="4.8" fill="none" stroke="#c01818" stroke-width="1"/>
<rect x="792.0" y="721.0" width="4.8" height="4.8" fill="none" stroke="#c01818" stroke-width="1"/>
<text x="475.80" y="767.00" font-size="9.5" fill="#000" textLength="80.00" lengthAdjust="spacingAndGlyphs">Numer składowej</text>
<text transform="translate(450,727.5) rotate(-90)" font-size="10.5" fill="#000" textLength="76" lengthAdjust="spacingAndGlyphs">Wartość własna</text>
<path d="M408.2,614.6 h4 v-2.6 l5,4.3 l-5,4.3 v-2.6 h-4 z" fill="#e81010"/>
<path d="M880.5,640.5 v13 l3,-3 l2.6,6 l2,-1 l-2.6,-5.8 h4.4 z" fill="#fff" stroke="#000" stroke-width="0.9"/>
</g>
</g>
</svg>
</body></html>
